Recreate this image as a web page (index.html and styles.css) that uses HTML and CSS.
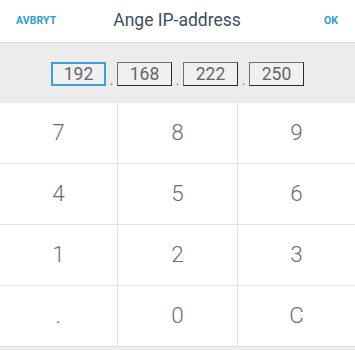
FILE: index.html
```html
<!DOCTYPE html>
<html>
<head>
<meta charset="utf-8">
<link rel="stylesheet" href="styles.css">
</head>
<body>
<div class="dialog">
  <div class="header">
    <span class="action left">AVBRYT</span>
    <span class="title">Ange IP-address</span>
    <span class="action right">OK</span>
  </div>
  <div class="ipbar">
    <span class="octet active">192</span><span class="sep">.</span>
    <span class="octet">168</span><span class="sep">.</span>
    <span class="octet">222</span><span class="sep">.</span>
    <span class="octet">250</span>
  </div>
  <div class="keypad">
    <div class="key">7</div><div class="key">8</div><div class="key">9</div>
    <div class="key">4</div><div class="key">5</div><div class="key">6</div>
    <div class="key">1</div><div class="key">2</div><div class="key">3</div>
    <div class="key">.</div><div class="key">0</div><div class="key">C</div>
  </div>
</div>
</body>
</html>
```
FILE: styles.css
```css
html, body {
  margin: 0;
  padding: 0;
  background: #ececec;
}
body {
  width: 355px;
  height: 350px;
  overflow: hidden;
  font-family: Roboto, "Liberation Sans", sans-serif;
}
.dialog {
  width: 355px;
}
.header {
  height: 42px;
  background: #ffffff;
  border-bottom: 1px solid #d8d8d8;
  display: grid;
  grid-template-columns: 1fr auto 1fr;
  align-items: center;
  padding: 0 17px 0 16px;
}
.action {
  color: #2d9bd7;
  font-weight: bold;
  font-size: 10.5px;
  letter-spacing: 0.1px;
  padding-bottom: 2px;
}
.action.right {
  justify-self: end;
}
.title {
  color: #3c4e5c;
  font-size: 17.5px;
  padding-bottom: 2px;
}
.ipbar {
  height: 60px;
  display: flex;
  align-items: center;
  justify-content: center;
  padding-top: 2px;
  box-sizing: border-box;
}
.octet {
  width: 55px;
  height: 24px;
  box-sizing: border-box;
  border: 1px solid #707070;
  border-right-color: #2a2a2a;
  border-bottom-color: #2a2a2a;
  background: #f0f0f0;
  color: #666;
  font-size: 17.5px;
  display: flex;
  align-items: center;
  justify-content: center;
}
.octet.active {
  border: 2px solid #3aa3db;
}
.sep {
  width: 11px;
  text-align: center;
  color: #777;
  font-size: 14px;
  align-self: center;
  padding-top: 12px;
}
.keypad {
  display: grid;
  grid-template-columns: 117px 120px 118px;
  grid-auto-rows: 61px;
  background: #ffffff;
}
.key {
  display: flex;
  align-items: center;
  justify-content: center;
  color: #6a6e74;
  font-size: 22.5px;
  font-weight: 300;
  border-bottom: 1px solid #e2e2e2;
  border-left: 1px solid #e2e2e2;
  box-sizing: border-box;
  padding-bottom: 2px;
}
.key:nth-child(3n+1) {
  border-left: none;
}
```
